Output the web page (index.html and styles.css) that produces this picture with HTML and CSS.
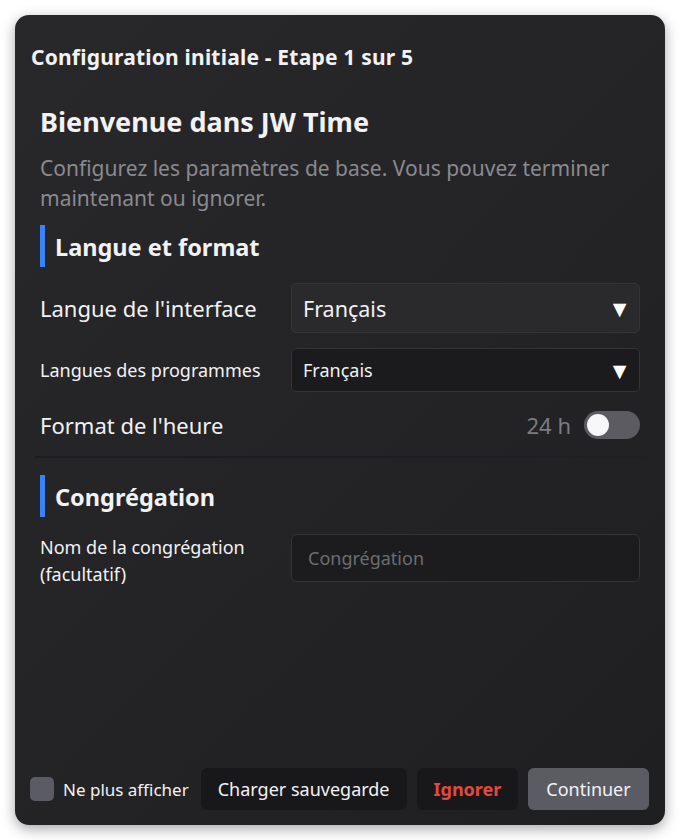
FILE: index.html
```html
<!DOCTYPE html>
<html lang="fr">

<head>
    <meta charset="UTF-8" />
    <title>JW Time - Configuration</title>
    <link rel="stylesheet" href="styles.css">
</head>

<body>
    <div class="dialog">
        <div class="title">Configuration initiale - Etape 1 sur 5</div>
        <div class="content">
            <h1>Bienvenue dans JW Time</h1>
            <p class="intro">Configurez les paramètres de base. Vous pouvez terminer maintenant ou ignorer.</p>

            <!-- Langue et format -->
            <h2 class="section">Langue et format</h2>
            <div class="row first">
                <label class="label">Langue de l'interface</label>
                <div class="select">
                    <span>Français</span>
                    <span class="arrow">▼</span>
                </div>
            </div>
            <div class="row">
                <label class="label small">Langues des programmes</label>
                <div class="select dark">
                    <span>Français</span>
                    <span class="arrow">▼</span>
                </div>
            </div>
            <div class="row hour">
                <label class="label">Format de l'heure</label>
                <div class="switch-wrap">
                    <span class="unit">24 h</span>
                    <span class="switch"><span class="knob"></span></span>
                </div>
            </div>
            <div class="divider"></div>

            <!-- Congrégation -->
            <h2 class="section">Congrégation</h2>
            <div class="row name">
                <label class="label small">Nom de la congrégation<br>(facultatif)</label>
                <input class="field" type="text" placeholder="Congrégation" />
            </div>
        </div>
        <div class="footer">
            <label class="check"><span class="box"></span>Ne plus afficher</label>
            <button class="btn dark">Charger sauvegarde</button>
            <button class="btn dark danger">Ignorer</button>
            <button class="btn primary">Continuer</button>
        </div>
    </div>
</body>

</html>
```

FILE: styles.css
```css
body {
    margin: 0;
    padding: 15px;
    background-color: #fff;
    font-family: "Noto Sans", "Open Sans", sans-serif;
    color: #f2f2f4;
}

.dialog {
    width: 650px;
    height: 810px;
    box-sizing: border-box;
    display: flex;
    flex-direction: column;
    border-radius: 14px;
    background: linear-gradient(135deg, #28282b 0%, #232325 60%, #1f1f21 100%);
    box-shadow: 0 4px 14px rgba(0, 0, 0, 0.35);
}

.title {
    padding: 28px 16px 0;
    font-size: 21px;
    font-weight: 700;
    line-height: 28px;
    letter-spacing: 0.2px;
}

.content {
    flex: 1;
    padding: 0 25px;
}

h1 {
    margin: 33px 0 0;
    font-size: 27px;
    font-weight: 700;
    line-height: 36px;
}

.intro {
    margin: 13px 0 0;
    font-size: 21px;
    line-height: 30px;
    color: #8a8a90;
}

.section {
    margin: 12px 0 0;
    padding: 2px 0 0 10px;
    border-left: 5px solid #3b82f6;
    font-size: 23.5px;
    font-weight: 700;
    line-height: 40px;
}

.row {
    display: grid;
    grid-template-columns: 251px 1fr;
    align-items: center;
    margin-top: 15px;
}

.row.first {
    margin-top: 16px;
}

.row.name {
    align-items: start;
    margin-top: 17px;
}

.label {
    font-size: 22px;
    line-height: 30px;
}

.label.small {
    font-size: 18px;
    line-height: 28px;
}

.row.name .label {
    line-height: 27px;
}

.select {
    display: flex;
    justify-content: space-between;
    align-items: center;
    height: 50px;
    box-sizing: border-box;
    padding: 0 8px 0 11px;
    border: 1px solid #343437;
    border-radius: 5px;
    background-color: #2a2a2d;
    font-size: 21.5px;
}

.select.dark {
    height: 44px;
    background-color: #1b1b1d;
    font-size: 18px;
}

.arrow {
    font-size: 23px;
    line-height: 1;
    color: #fff;
}

.row.hour {
    margin-top: 18px;
}

.divider {
    height: 2px;
    margin: 16px -5px 0;
    background: linear-gradient(90deg, #1d1d21 0%, #1e1e22 80%, rgba(30, 30, 34, 0.4) 100%);
}

.divider + .section {
    margin-top: 17px;
}

.switch-wrap {
    display: flex;
    justify-content: flex-end;
    align-items: center;
    gap: 13px;
}

.unit {
    font-size: 22px;
    color: #7c7c82;
}

.switch {
    display: flex;
    align-items: center;
    width: 56px;
    height: 28px;
    box-sizing: border-box;
    padding: 3px;
    border-radius: 14px;
    background-color: #5b5b61;
}

.knob {
    width: 22px;
    height: 22px;
    border-radius: 50%;
    background-color: #f7f7fa;
}

.field {
    height: 48px;
    box-sizing: border-box;
    padding: 0 16px;
    border: 1px solid #333336;
    border-radius: 6px;
    background-color: #1c1c1e;
    outline: none;
    font-family: inherit;
    font-size: 18px;
    color: #f2f2f4;
}

.field::placeholder {
    color: #6c6c72;
}

.footer {
    display: flex;
    align-items: center;
    gap: 10px;
    padding: 0 16px 15px 15px;
    white-space: nowrap;
}

.check {
    display: flex;
    align-items: center;
    gap: 9px;
    margin-right: 2px;
    font-size: 17px;
}

.box {
    width: 24px;
    height: 24px;
    border-radius: 5px;
    background-color: #5b5b63;
}

.btn {
    flex: none;
    height: 42px;
    padding: 0 17px;
    border: none;
    border-radius: 6px;
    font-family: inherit;
    font-size: 18px;
    color: #f2f2f4;
}

.btn.dark {
    background-color: #18181a;
}

.btn.danger {
    padding: 0 17px;
    color: #e5483f;
    font-weight: 700;
}

.btn.primary {
    padding: 0 18px;
    background-color: #5b5c63;
}
```
